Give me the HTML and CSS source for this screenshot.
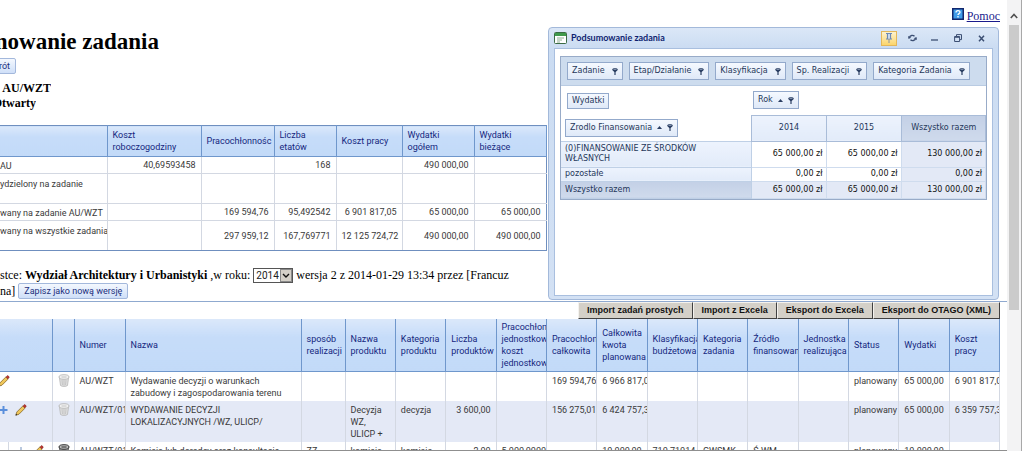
FILE: index.html
```html
<!DOCTYPE html>
<html lang="pl">
<head>
<meta charset="utf-8">
<title>Podsumowanie zadania</title>
<link rel="stylesheet" href="styles.css">
</head>
<body>
<svg class="defs" aria-hidden="true">
  <symbol id="pin" viewBox="0 0 6 7"><path d="M.2 1.500C.2-.2 5.800-.2 5.800 1.500 5.800 2.800 4 3.200 3.600 4.200V7H2.400V4.200C2 3.200.2 2.800.2 1.500z" fill="#2b3f63"/><path d="M1.500 1.500h3" stroke="#b9c8de" stroke-width=".6"/></symbol>
  <symbol id="up" viewBox="0 0 5 3"><path d="M0 3L2.500 0 5 3z" fill="#2b3f63"/></symbol>
  <symbol id="pencil" viewBox="0 0 12 12"><path d="M.8 11.200l1-3.200 6-6 2.200 2.200-6 6z" fill="#f0c75a" stroke="#7a5a1c" stroke-width=".7"/><path d="M8 1.900l1.200-1.200c.6-.5 2.400 1.200 1.900 1.900L9.900 4z" fill="#c0352f" stroke="#7b2a22" stroke-width=".5"/><path d="M.6 11.500l.5-1.800 1.200 1.200z" fill="#222"/></symbol>
  <symbol id="bin" viewBox="0 0 12 13"><path d="M1.500 4l1 7.500c1.500 1.200 5.500 1.200 7 0l1-7.500z" fill="#e2e2e2" stroke="#b5b5b5" stroke-width=".8"/><path d="M4 6l.4 5M6 6v5.500M8 6l-.4 5" stroke="#bbb" stroke-width=".8"/><ellipse cx="6" cy="3" rx="5" ry="2.300" fill="#f1f1f1" stroke="#b0b0b0" stroke-width=".8"/><path d="M3.500 3h5" stroke="#c4c4c4"/></symbol>
  <symbol id="bin-dark" viewBox="0 0 12 13"><path d="M1.500 4l1 7.500c1.500 1.200 5.500 1.200 7 0l1-7.500z" fill="#aaa" stroke="#444" stroke-width=".8"/><ellipse cx="6" cy="3" rx="5" ry="2.300" fill="#bbb" stroke="#333"/><path d="M3.500 3h5" stroke="#333"/></symbol>
</svg>
<main class="page">
  <header class="top">
    <a class="help" href="#"><svg width="12" height="12" viewBox="0 0 12 12"><rect width="12" height="12" fill="#12276e"/><rect x="1.500" y="1.500" width="9" height="9" fill="#3f9be8"/><path d="M4 4.500c0-2.500 4-2.500 4-.3 0 1.500-2 1.300-2 2.800M6 8v1.500" stroke="#fff" stroke-width="1.300" fill="none"/></svg><span>Pomoc</span></a>
  </header>
  <section class="intro">
    <div class="clip clip-title"><h1>mowanie zadania</h1></div>
    <div class="clip clip-back"><button class="btn">Powrót</button></div>
    <div class="clip clip-fact"><b>: AU/WZT</b></div>
    <div class="clip clip-state"><b>Otwarty</b></div>
  </section>

  <table class="grid summary">
    <colgroup><col class="s1"><col class="s2"><col class="s3"><col class="s4"><col class="s5"><col class="s6"><col class="s6"></colgroup>
    <thead><tr><th></th><th>Koszt roboczogodziny</th><th class="nw">Pracochłonnośc</th><th>Liczba etatów</th><th>Koszt pracy</th><th>Wydatki ogółem</th><th>Wydatki bieżące</th></tr></thead>
    <tbody>
      <tr><td>AU</td><td>40,69593458</td><td></td><td>168</td><td></td><td>490 000,00</td><td></td></tr>
      <tr class="tall"><td>ydzielony na zadanie</td><td></td><td></td><td></td><td></td><td></td><td></td></tr>
      <tr><td>wany na zadanie AU/WZT</td><td></td><td>169 594,76</td><td>95,492542</td><td>6 901 817,05</td><td>65 000,00</td><td>65 000,00</td></tr>
      <tr class="tall"><td>wany na wszystkie zadania</td><td></td><td>297 959,12</td><td>167,769771</td><td>12 125 724,72</td><td>490 000,00</td><td>490 000,00</td></tr>
    </tbody>
  </table>

  <section class="version">
    <div class="vline"><span>stce: <b>Wydział Architektury i Urbanistyki</b> ,w roku:</span>
      <span class="pick"><select aria-label="Rok"><option>2014</option><option>2015</option></select><svg width="12" height="13" viewBox="0 0 12 13"><rect x=".5" y=".5" width="11" height="12" fill="#d4d0c8" stroke="#8a8a8a"/><path d="M3 5l3 3 3-3" fill="none" stroke="#111" stroke-width="1.400"/></svg></span>
      <span>wersja 2 z 2014-01-29 13:34 przez [Francuz</span></div>
    <div class="vline"><span>na]</span><button class="btn">Zapisz jako nową wersję</button></div>
  </section>

  <div class="tools">
    <button>Import zadań prostych</button><button>Import z Excela</button><button>Eksport do Excela</button><button>Eksport do OTAGO (XML)</button>
  </div>

  <table class="grid tasks">
    <colgroup><col class="t1"><col class="t2"><col class="t3"><col class="t4"><col class="t5"><col span="13" class="t6"></colgroup>
    <thead><tr><th></th><th></th><th>Numer</th><th>Nazwa</th><th>sposób realizacji</th><th>Nazwa produktu</th><th>Kategoria produktu</th><th>Liczba produktów</th><th>Pracochłonn jednostkow koszt jednostkow</th><th>Pracochłon całkowita</th><th>Całkowita kwota planowana</th><th>Klasyfikacja budżetowa</th><th>Kategoria zadania</th><th>Źródło finansowan</th><th>Jednostka realizująca</th><th>Status</th><th>Wydatki</th><th>Koszt pracy</th></tr></thead>
    <tbody>
      <tr class="r1"><td class="act"><div><svg width="10" height="12"><use href="#pencil" x="-2" width="12" height="12"/></svg></div></td><td class="ico"><svg width="12" height="13"><use href="#bin"/></svg></td><td>AU/WZT</td><td>Wydawanie decyzji o warunkach zabudowy i zagospodarowania terenu</td><td></td><td></td><td></td><td></td><td></td><td class="nw">169 594,76</td><td class="nw">6 966 817,0</td><td></td><td></td><td></td><td></td><td>planowany</td><td class="num">65 000,00</td><td class="nw">6 901 817,0</td></tr>
      <tr class="r2"><td class="act"><div><svg width="8" height="12" viewBox="0 0 8 12"><path d="M2.500 2h2v3h3v2h-3v3h-2V7H0V5h2.500z" fill="#5a8fdc"/></svg><svg width="12" height="12"><use href="#pencil"/></svg></div></td><td class="ico"><svg width="12" height="13"><use href="#bin"/></svg></td><td class="nw">AU/WZT/01</td><td>WYDAWANIE DECYZJI<br>LOKALIZACYJNYCH /WZ, ULICP/</td><td></td><td>Decyzja WZ, ULICP&nbsp;+</td><td>decyzja</td><td class="num">3 600,00</td><td></td><td class="nw">156 275,01</td><td class="nw">6 424 757,3</td><td></td><td></td><td></td><td></td><td>planowany</td><td class="num">65 000,00</td><td class="nw">6 359 757,3</td></tr>
      <tr class="r3"><td class="act sub"><div><svg width="8" height="12" viewBox="0 0 8 12"><path d="M3 2h2v3h3v2H5v3H3V7H0V5h3z" fill="#b9c8de"/></svg><svg width="12" height="12"><use href="#pencil"/></svg></div></td><td class="ico"><svg width="12" height="13"><use href="#bin-dark"/></svg></td><td class="nw">AU/WZT/01</td><td class="nw">Komisja lub doradcy oraz konsultacje</td><td>ZZ</td><td>komisja</td><td>komisja</td><td class="num">2,00</td><td class="nw">5 000,0000</td><td></td><td class="num">10 000,00</td><td class="nw">710 71014 4</td><td>GWSMK</td><td>Ś-WM</td><td></td><td>planowany</td><td class="num">10 000,00</td><td></td></tr>
    </tbody>
  </table>
</main>

<section class="window">
  <header class="titlebar">
    <svg width="13" height="12" viewBox="0 0 13 12"><rect x=".5" y=".5" width="12" height="11" rx="1" fill="#fff" stroke="#3b6b45"/><path d="M1 1h11v3H1z" fill="#3f9a4c"/><path d="M3 6h7M3 8h5M3 10h3" stroke="#8fae94"/></svg>
    <h2>Podsumowanie zadania</h2>
    <div class="cmds">
      <button class="on" aria-label="Przypnij"><svg width="8" height="11" viewBox="0 0 8 11"><path d="M1 .5h6M2.500 1v4.500M5.500 1v4.500M1 6h6" stroke="#6d89b4" stroke-width="1.200" fill="none"/><path d="M3 1h2v4.500H3z" fill="#c8d8ee"/><path d="M4 6v4" stroke="#8b93a0"/></svg></button>
      <button aria-label="Odśwież"><svg width="9" height="8" viewBox="0 0 9 8"><path d="M1.300 3.600C2 1.200 5 .8 6.500 2.300M7.700 4.400C7 6.800 4 7.200 2.500 5.700" stroke="#3c4f73" stroke-width="1.400" fill="none"/><path d="M0 2l.5 3 2.700-1.200zM9 6l-.5-3-2.700 1.200z" fill="#3c4f73"/></svg></button>
      <button aria-label="Minimalizuj"><svg width="8" height="8" viewBox="0 0 8 8"><path d="M0 6h7" stroke="#3c4f73" stroke-width="1.300"/></svg></button>
      <button aria-label="Maksymalizuj"><svg width="8" height="8" viewBox="0 0 8 8"><path d="M2.500 2V.6h5v5H6M.6 2.500h5v5h-5zM.6 3.300h5" stroke="#3c4f73" fill="none"/></svg></button>
      <button aria-label="Zamknij"><svg width="7" height="7" viewBox="0 0 7 7"><path d="M1 .8l5 5.400M6 .8L1 6.200" stroke="#3c4f73" stroke-width="1.500"/></svg></button>
    </div>
  </header>
  <div class="client">
    <div class="pivot">
      <div class="filters">
        <button class="fld">Zadanie<svg width="6" height="7"><use href="#pin"/></svg></button>
        <button class="fld">Etap/Działanie<svg width="6" height="7"><use href="#pin"/></svg></button>
        <button class="fld">Klasyfikacja<svg width="6" height="7"><use href="#pin"/></svg></button>
        <button class="fld">Sp. Realizacji<svg width="6" height="7"><use href="#pin"/></svg></button>
        <button class="fld">Kategoria Zadania<svg width="6" height="7"><use href="#pin"/></svg></button>
      </div>
      <table>
        <colgroup><col class="p1"><col class="p2"><col class="p2"><col></colgroup>
        <tr class="areas"><td class="data"><button class="fld">Wydatki</button></td><td colspan="3" class="cols"><button class="fld sort">Rok<svg width="5" height="3"><use href="#up"/></svg><svg width="6" height="7"><use href="#pin"/></svg></button></td></tr>
        <tr class="heads"><td class="rows"><button class="fld sort">Zrodlo Finansowania<svg width="5" height="3"><use href="#up"/></svg><svg width="6" height="7"><use href="#pin"/></svg></button></td><th>2014</th><th>2015</th><th class="sum">Wszystko razem</th></tr>
        <tr class="v1"><th>(0)FINANSOWANIE ZE ŚRODKÓW<br>WŁASNYCH</th><td>65 000,00 zł</td><td>65 000,00 zł</td><td class="tot">130 000,00 zł</td></tr>
        <tr class="v2"><th>pozostałe</th><td>0,00 zł</td><td>0,00 zł</td><td class="tot">0,00 zł</td></tr>
        <tr class="v3"><th class="sum">Wszystko razem</th><td class="tot">65 000,00 zł</td><td class="tot">65 000,00 zł</td><td class="tot">130 000,00 zł</td></tr>
      </table>
    </div>
  </div>
</section>

<aside class="scroll" aria-hidden="true">
  <svg width="8" height="6" viewBox="0 0 8 6"><path d="M.8 5L4 1.500 7.200 5" fill="none" stroke="#505050" stroke-width="1.600"/></svg>
  <div class="thumb"></div>
</aside>
</body>
</html>
```
FILE: styles.css
```css
* { box-sizing: border-box; }
body {
  margin: 0;
  height: 100vh;
  display: flex;
  position: relative;
  overflow: hidden;
  background: #fff;
  color: #000;
  font: 12px/16px "Liberation Serif", "Times New Roman", serif;
}
.defs { position: absolute; width: 0; height: 0; }
svg { display: block; flex: none; }
button { cursor: pointer; }

.page { flex: 1; min-width: 0; overflow: hidden; border-bottom: 1px solid #8f8f8f; }

.top { display: flex; justify-content: flex-end; padding: 8px 7px 0 0; }
.help { display: flex; gap: 3px; color: #1a1a8c; }

/* Header texts run off the left edge and are anchored on the right. */
.intro { display: flex; flex-direction: column; padding-top: 4px; height: 101px; }
.clip { display: flex; justify-content: flex-end; overflow: hidden; white-space: nowrap; flex: none; }
.clip-title { width: 159px; margin-bottom: 2px; }
.clip-back { width: 16px; margin-bottom: 7px; }
.clip-fact { width: 51px; line-height: 15px; }
.clip-state { width: 36px; line-height: 14px; }
h1 { margin: 0; font-size: 23px; line-height: 28px; }

.btn {
  flex: none;
  height: 16px;
  padding: 0 5px;
  border: 1px solid #a3b8dc;
  border-radius: 2px;
  background: linear-gradient(#f4f8fe, #cfdff8);
  color: #1b2f7d;
  font: 9px/12px Roboto, sans-serif;
}

.grid {
  table-layout: fixed;
  border-collapse: collapse;
  color: #3a3a3a;
  font: 9px/12px Roboto, "Open Sans", sans-serif;
}
.grid th, .grid td { overflow: hidden; padding: 2px 5px; text-align: left; font-weight: 400; }
.grid th {
  color: #14277e;
  border-right: 1px solid #6f97cc;
  background: linear-gradient(#dbe8fa, #c6dcf9 35%, #c2daf8);
}
.grid thead { border-bottom: 1px solid #6f97cc; }
.grid td { border-right: 1px solid #d3d8e2; }
.grid .nw { white-space: nowrap; padding-right: 0; }

.summary { width: 546px; border: 1px solid #6f8fbf; border-left: 0; }
.summary th { height: 31px; }
.summary td { height: 17px; text-align: right; border-bottom: 1px solid #d3d8e2; white-space: nowrap; }
.summary td:first-child { text-align: left; padding: 3px 0 1px; }
.summary td:last-child { border-right-color: #6f8fbf; }
.summary .tall td { height: 30px; }
.summary .tall td:first-child { vertical-align: top; padding-top: 4px; }
.summary tr:last-child td { border-bottom-color: #6f8fbf; }
.s1 { width: 107px; }
.s2 { width: 94px; }
.s3 { width: 73px; }
.s4 { width: 62px; }
.s5 { width: 66px; }
.s6 { width: 72px; }

.version { padding: 16px 0 2px; border-bottom: 1px solid #8fa9cf; }
.vline { display: flex; align-items: center; gap: 3px; height: 16px; white-space: nowrap; }
.pick { position: relative; }
.pick select {
  display: block;
  appearance: none;
  width: 40px;
  height: 15px;
  padding: 0 2px;
  border: 1px solid #555;
  border-radius: 0;
  background: #fff;
  color: #222;
  font: 10px/13px Roboto, sans-serif;
}
.pick svg { position: absolute; right: 1px; top: 1px; pointer-events: none; }

.tools { display: flex; justify-content: flex-end; padding-right: 7px; }
.tools button {
  height: 17px;
  padding: 0 8px;
  border: 1px solid #f4f2ee;
  border-right-color: #404040;
  border-bottom-color: #404040;
  background: #d4d0c8;
  color: #111;
  font: bold 9px/13px "Liberation Sans", Arial, sans-serif;
}

.tasks { width: calc(100% - 7px); }
.tasks th { height: 52px; padding: 2px 0 2px 5px; }
.tasks td { vertical-align: top; padding: 3px 5px 0; }
.tasks .num { text-align: right; white-space: nowrap; }
.tasks td:nth-child(16) { padding-right: 0; }
.tasks .act { padding-left: 0; }
.tasks .act div { display: flex; gap: 7px; }
.tasks .sub { padding-top: 0; }
.tasks .sub div { margin-left: 8px; padding: 3px 0 0 8px; height: 29px; border-left: 1px solid #d3d8e2; }
.tasks .ico { padding: 2px 5px; }
.r1 td { height: 29px; }
.r2 td { height: 41px; background: #e4e9f6; }
.r3 td { height: 29px; }
.t1 { width: 52px; }
.t2 { width: 22px; }
.t3 { width: 51px; }
.t4 { width: 176px; }
.t5 { width: 44px; }

.window {
  position: absolute;
  top: 27px;
  right: 24px;
  width: 451px;
  height: 273px;
  display: flex;
  flex-direction: column;
  padding: 0 5px 3px;
  border: 1px solid #a3b9da;
  border-radius: 4px;
  background: linear-gradient(#dbe7f7, #cbdcf2 20px, #d3e1f4);
  font-family: "DejaVu Sans", Verdana, sans-serif;
}
.titlebar { display: flex; align-items: center; gap: 4px; height: 20px; }
h2 { margin: 0; font: bold 9px/12px Lato, sans-serif; color: #0f1f70; }
.cmds { display: flex; margin-left: auto; gap: 7px; padding-right: 4px; }
.cmds button { width: 16px; height: 15px; padding: 0; border: 0; background: none; display: grid; place-items: center; }
.cmds .on { border: 1px solid #e3b75a; background: linear-gradient(#fdf2cf, #fbd56c); }
.client { flex: 1; padding: 7px 5px; border: 1px solid #a9bfdf; background: #fff; }

.pivot { border: 1px solid #98abc8; font-size: 8px; line-height: 10px; color: #25375a; }
.filters { display: flex; gap: 6px; height: 29px; padding: 5px 6px; background: #cddcee; border-bottom: 1px solid #b9cbe2; }
.fld {
  display: inline-flex;
  align-items: center;
  gap: 7px;
  height: 18px;
  padding: 0 4px;
  border: 1px solid #93a9cb;
  background: linear-gradient(#f5f9ff, #dfe9f8);
  color: #25375a;
  white-space: nowrap;
  font: 8px/10px "DejaVu Sans", Verdana, sans-serif;
}
.sort { gap: 5px; }
.pivot table { width: 100%; table-layout: fixed; border-collapse: collapse; }
.p1 { width: 190px; }
.p2 { width: 75px; }
.pivot td, .pivot th { padding: 0 3px 0 4px; font-weight: 400; }
.pivot td { text-align: right; color: #111; }
.pivot th { text-align: left; border: 1px solid #bfd0e6; border-left: 0; background: linear-gradient(#edf3fd, #e2ebf9); }
.pivot .areas td { height: 29px; text-align: left; }
.areas .data { padding-left: 6px; }
.areas .data .fld { height: 16px; }
.areas .cols { padding-left: 2px; }
.heads td.rows { text-align: left; height: 26px; }
.pivot .heads th { text-align: center; border: 1px solid #a9bcd8; }
.pivot .sum { background: linear-gradient(#c3d0e6, #cfdaec); }
.v1 { height: 26px; }
.v2 { height: 14px; }
.v3 { height: 17px; }
.v1 td, .v2 td, .v3 td { border: 1px solid #cfdcee; }
.pivot .tot { background: #e3e9f6; }

.scroll {
  flex: none;
  width: 15px;
  margin-right: 1px;
  display: flex;
  flex-direction: column;
  align-items: center;
  padding: 13px 2px 0 1px;
  gap: 6px;
  border-right: 1px solid #a8a8a8;
  background: #f3f3f4;
}
.thumb { width: 10px; height: 65%; background: #cbcbcb; }
```
